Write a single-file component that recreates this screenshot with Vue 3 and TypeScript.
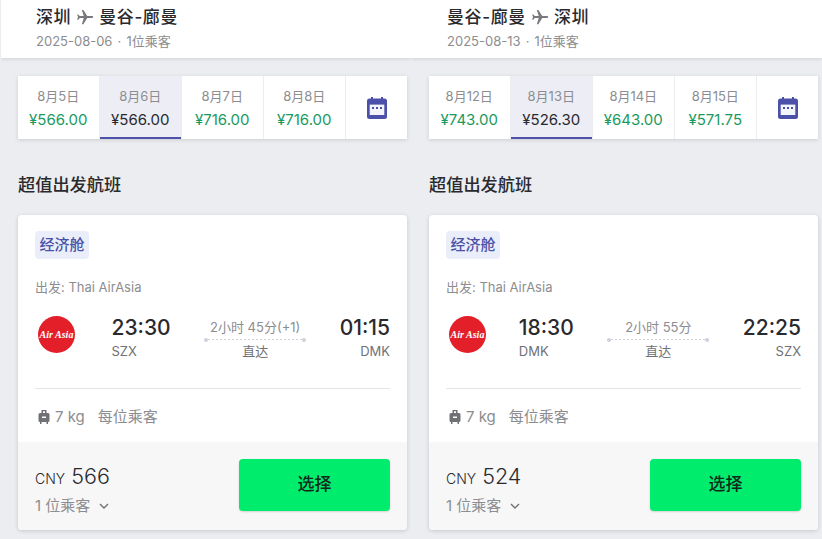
<script setup lang="ts">
interface DateCell {
  label: string;
  price: string;
  active?: boolean;
}

interface Trip {
  from: string;
  to: string;
  meta: string;
  dates: DateCell[];
  depart: string;
  departCode: string;
  arrive: string;
  arriveCode: string;
  duration: string;
  price: number;
}

const trips: Trip[] = [
  {
    from: "深圳",
    to: "曼谷-廊曼",
    meta: "2025-08-06 · 1位乘客",
    dates: [
      { label: "8月5日", price: "¥566.00" },
      { label: "8月6日", price: "¥566.00", active: true },
      { label: "8月7日", price: "¥716.00" },
      { label: "8月8日", price: "¥716.00" },
    ],
    depart: "23:30",
    departCode: "SZX",
    arrive: "01:15",
    arriveCode: "DMK",
    duration: "2小时 45分(+1)",
    price: 566,
  },
  {
    from: "曼谷-廊曼",
    to: "深圳",
    meta: "2025-08-13 · 1位乘客",
    dates: [
      { label: "8月12日", price: "¥743.00" },
      { label: "8月13日", price: "¥526.30", active: true },
      { label: "8月14日", price: "¥643.00" },
      { label: "8月15日", price: "¥571.75" },
    ],
    depart: "18:30",
    departCode: "DMK",
    arrive: "22:25",
    arriveCode: "SZX",
    duration: "2小时 55分",
    price: 524,
  },
];
</script>

<template>
  <div class="page">
    <section v-for="trip in trips" :key="trip.meta" class="col">
      <header class="head">
        <div class="route">
          <span>{{ trip.from }}</span>
          <svg class="plane" viewBox="0 0 24 24" width="18" height="18">
            <path
              fill="#77797d"
              d="M23 12c0-.7-.8-1.200-1.800-1.200H15L9.800 2.500H7.800l2.500 8.300H5L3 8.500H1.500L2.700 12l-1.200 3.500H3l2-2.300h5.300L7.800 21.500h2l5.200-8.300h6.200c1 0 1.800-.5 1.800-1.200z"
            />
          </svg>
          <span>{{ trip.to }}</span>
        </div>
        <div class="meta">{{ trip.meta }}</div>
      </header>

      <div class="dates">
        <div
          v-for="d in trip.dates"
          :key="d.label"
          class="date"
          :class="{ active: d.active }"
        >
          <span class="date-label">{{ d.label }}</span>
          <span class="date-price">{{ d.price }}</span>
        </div>
        <div class="date">
          <svg viewBox="0 0 20 22" width="20" height="22">
            <path
              fill="#4b50a8"
              d="M4 0h2v1.500h8V0h2v1.500h1.500A2.500 2.500 0 0 1 20 4v15.500a2.500 2.500 0 0 1-2.500 2.500h-15A2.500 2.500 0 0 1 0 19.500V4a2.500 2.500 0 0 1 2.500-2.500H4z"
            />
            <rect x="2.700" y="7.600" width="14.600" height="10.400" fill="#f4f5fb" />
            <rect x="5" y="10" width="2" height="2" fill="#4b50a8" />
            <rect x="9" y="10" width="2" height="2" fill="#4b50a8" />
            <rect x="13" y="10" width="2" height="2" fill="#4b50a8" />
          </svg>
        </div>
      </div>

      <h2 class="title">超值出发航班</h2>

      <article class="card">
        <div class="body">
          <span class="tag">经济舱</span>
          <div class="carrier">出发: Thai AirAsia</div>

          <div class="flight">
            <div class="logo"><span>Air Asia</span></div>
            <div class="times">
              <div class="point">
                <span class="time">{{ trip.depart }}</span>
                <span class="code">{{ trip.departCode }}</span>
              </div>
              <div class="mid">
                <span>{{ trip.duration }}</span>
                <i class="line"></i>
                <span class="stops">直达</span>
              </div>
              <div class="point end">
                <span class="time">{{ trip.arrive }}</span>
                <span class="code">{{ trip.arriveCode }}</span>
              </div>
            </div>
          </div>

          <div class="bag">
            <svg viewBox="0 0 12 14" width="12" height="14">
              <path
                fill="#6f7175"
                fill-rule="evenodd"
                d="M3.500 0h5v3h1.500A1.500 1.500 0 0 1 11.500 4.500v6A1.500 1.500 0 0 1 10 12v2H8.500v-2h-5v2H2v-2A1.500 1.500 0 0 1 .5 10.500v-6A1.500 1.500 0 0 1 2 3h1.500zM5 1.200V3h2V1.200zM4 6.500V8h4V6.500z"
              />
            </svg>
            <span>7 kg</span>
            <span class="bag-note">每位乘客</span>
          </div>
        </div>

        <footer class="foot">
          <div class="price-box">
            <div class="total"><small>CNY</small> {{ trip.price }}</div>
            <div class="pax">
              1 位乘客
              <svg viewBox="0 0 10 6" width="10" height="6">
                <path d="M1 1l4 4 4-4" fill="none" stroke="#6f7175" stroke-width="1.400" />
              </svg>
            </div>
          </div>
          <button class="pick" type="button">选择</button>
        </footer>
      </article>
    </section>
  </div>
</template>

<style>
html,
body {
  margin: 0;
  background: #ebedf1;
  overflow: hidden;
}
</style>

<style scoped>
.page {
  display: grid;
  grid-template-columns: 411px 411px;
  height: 539px;
  overflow: hidden;
  font-family: Inter, "Noto Sans CJK SC", sans-serif;
  color: #2a2a2e;
}

.head {
  height: 58px;
  box-sizing: border-box;
  padding: 5px 0 0 36px;
  background: #fff;
  box-shadow: 0 1px 4px rgba(0, 0, 0, 0.12);
  clip-path: inset(0 0 -8px 0);
}

.col:first-child .head {
  margin-left: 1px;
  padding-left: 35px;
}

.route {
  display: flex;
  align-items: center;
  gap: 5px;
  height: 24px;
  font-size: 17px;
  font-weight: 500;
  letter-spacing: 0.6px;
  line-height: 24px;
}

.meta {
  margin-top: 3px;
  font-size: 13px;
  line-height: 18px;
  word-spacing: 1.5px;
  color: #8c8d90;
}

.dates {
  display: grid;
  grid-template-columns: repeat(4, 1fr) 61px;
  gap: 1.500px;
  width: 389px;
  height: 63px;
  margin: 18px 0 0 18px;
  box-shadow: 0 1px 4px rgba(0, 0, 0, 0.14);
}

.date {
  display: flex;
  flex-direction: column;
  align-items: center;
  justify-content: center;
  box-sizing: border-box;
  padding-top: 1px;
  background: #fff;
}

.date.active {
  background: #ecedf5;
  box-shadow: inset 0 -2px 0 #4e52a9;
}

.date-label {
  font-size: 13px;
  line-height: 22px;
  color: #8c8d90;
}

.date-price {
  margin-top: 1px;
  font-size: 15px;
  line-height: 24px;
  color: #1a9a5e;
}

.active .date-price {
  color: #2a2a2e;
}

.title {
  margin: 34px 0 0 18px;
  font-size: 17.200px;
  font-weight: 500;
  line-height: 24px;
}

.card {
  width: 389px;
  height: 315px;
  margin: 18px 0 0 18px;
  display: flex;
  flex-direction: column;
  border-radius: 4px;
  background: #fff;
  box-shadow: 0 1px 4px rgba(0, 0, 0, 0.16);
  overflow: hidden;
}

.body {
  flex: 1;
  padding: 16px 17px 0 17px;
}

.tag {
  display: inline-block;
  padding: 0 4.500px;
  border-radius: 4px;
  font-size: 15px;
  font-weight: 500;
  line-height: 28px;
  background: #e9eefa;
  color: #4b50a8;
}

.carrier {
  margin-top: 18px;
  font-size: 13px;
  line-height: 20px;
  color: #8c8d90;
}

.flight {
  display: flex;
  align-items: flex-start;
  justify-content: space-between;
  height: 50px;
  margin-top: 16px;
  padding: 0 0 6px 3px;
}

.logo {
  display: flex;
  align-items: center;
  justify-content: center;
  flex: none;
  width: 37px;
  height: 37px;
  margin-top: 3px;
  border-radius: 50%;
  background: #e3202a;
  font: italic 700 10px "Liberation Serif", serif;
  white-space: nowrap;
  color: #fff;
}

.times {
  display: flex;
  align-items: flex-start;
  gap: 33.500px;
}

.point {
  display: flex;
  flex-direction: column;
}

.point.end {
  align-items: flex-end;
}

.time {
  font-size: 21px;
  font-weight: 500;
  line-height: 30px;
}

.code {
  margin-top: -1px;
  font-size: 13px;
  line-height: 18px;
  color: #6f7175;
}

.mid {
  display: flex;
  flex-direction: column;
  align-items: center;
  width: 102px;
  padding-top: 5px;
  font-size: 13px;
  line-height: 18px;
  color: #8c8d90;
}

.line {
  display: flex;
  align-items: center;
  justify-content: space-between;
  width: 100%;
  height: 5px;
  margin-top: 1px;
  background: repeating-linear-gradient(90deg, #cfd2da 0 2px, transparent 2px 4px) center / 100% 1px no-repeat;
}

.line::before,
.line::after {
  content: "";
  width: 4px;
  height: 4px;
  border-radius: 50%;
  background: #cfd2da;
}

.stops {
  color: #6f7175;
}

.bag {
  display: flex;
  align-items: center;
  margin-top: 19px;
  padding-top: 18px;
  border-top: 1.500px solid #e3e4e8;
  font-size: 15px;
  line-height: 20px;
  color: #8c8d90;
}

.bag svg {
  margin: 0 5px 0 3px;
}

.bag-note {
  margin-left: 13px;
}

.foot {
  display: flex;
  align-items: center;
  justify-content: space-between;
  height: 88px;
  box-sizing: border-box;
  padding: 0 17px;
  background: #f7f7f8;
}

.price-box {
  padding-top: 6px;
}

.total {
  font-size: 21.500px;
  font-weight: 350;
  line-height: 30px;
  color: #2a2a2e;
}

.total small {
  font-size: 14px;
}

.pax {
  display: flex;
  align-items: center;
  gap: 9px;
  margin-top: 1px;
  font-size: 15px;
  line-height: 22px;
  color: #8c8d90;
}

.pick {
  width: 151px;
  height: 52px;
  margin-bottom: 2px;
  padding: 0 0 5px;
  border: 0;
  border-radius: 4px;
  background: #00ec6c;
  box-shadow: 0 1px 2px rgba(0, 0, 0, 0.15);
  font: 500 17px Inter, "Noto Sans CJK SC", sans-serif;
  color: #10291c;
}
</style>
